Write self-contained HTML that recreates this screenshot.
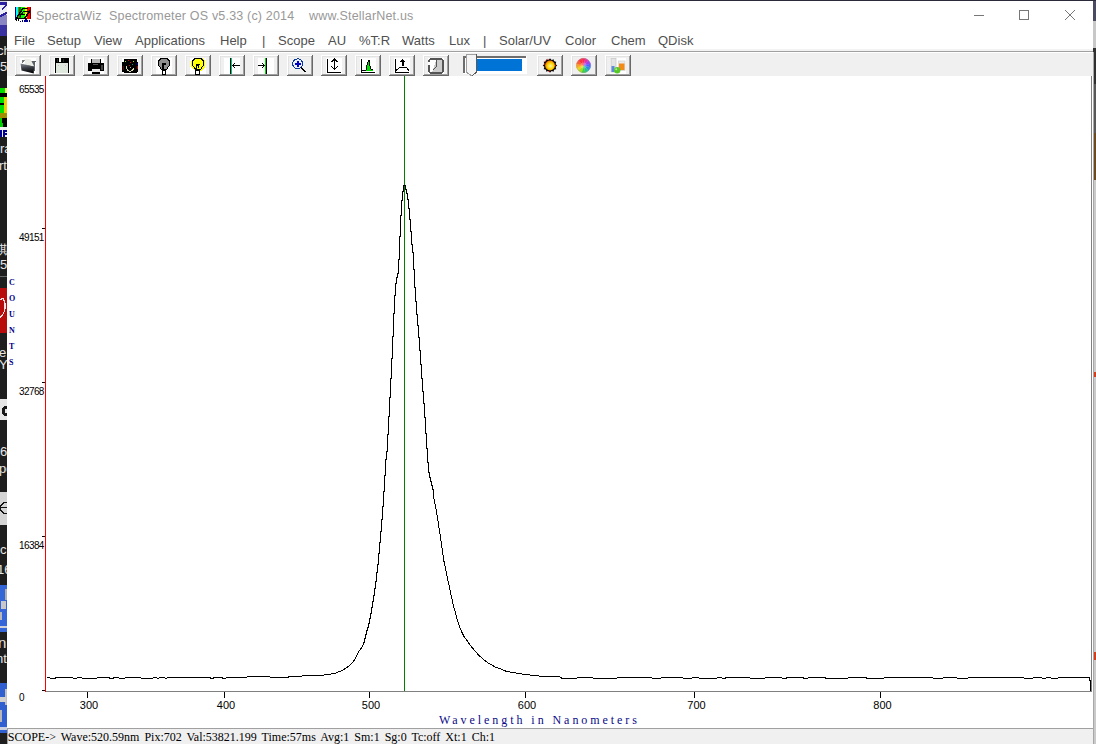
<!DOCTYPE html>
<html><head><meta charset="utf-8">
<style>
*{margin:0;padding:0;box-sizing:border-box}
html,body{width:1096px;height:744px;overflow:hidden;background:#fff;position:relative}
.a{position:absolute}
.sans{font-family:"Liberation Sans",sans-serif}
.serif{font-family:"Liberation Serif",serif}
.menu{position:absolute;top:33px;font-family:"Liberation Sans",sans-serif;font-size:13px;line-height:15px;color:#505050;white-space:pre}
.yl{position:absolute;left:19px;font-family:"Liberation Sans",sans-serif;font-size:10px;color:#000;letter-spacing:-0.6px;line-height:10px}
.xl{position:absolute;top:700px;font-family:"Liberation Sans",sans-serif;font-size:11px;color:#000;line-height:11px;width:40px;text-align:center}
.cnt{position:absolute;left:9px;font-family:"Liberation Serif",serif;font-weight:bold;font-size:8px;color:#00008b;line-height:8px}
</style></head><body>
<svg class="a" style="left:0;top:0" width="1096" height="744" shape-rendering="crispEdges">
 <defs><clipPath id="stripclip"><rect x="0" y="0" width="7" height="744"/></clipPath></defs>
 <g clip-path="url(#stripclip)"><rect x="0" y="0" width="7" height="15" fill="#eeeef6"/><rect x="0" y="15" width="7" height="10" fill="#8a86c4"/><rect x="0" y="25" width="7" height="11" fill="#3a32a0"/><rect x="0" y="36" width="7" height="52" fill="#1c1c1c"/><rect x="0" y="88" width="7" height="49" fill="#1e1e1e"/><rect x="0" y="137" width="7" height="151" fill="#1e1e1e"/><rect x="0" y="288" width="7" height="45" fill="#b80c0c"/><rect x="0" y="333" width="7" height="66" fill="#1e1e1e"/><rect x="0" y="399" width="7" height="21" fill="#e6e6e6"/><rect x="0" y="420" width="7" height="72" fill="#1e1e1e"/><rect x="0" y="492" width="7" height="33" fill="#d4d4d4"/><rect x="0" y="525" width="7" height="63" fill="#1e1e1e"/><rect x="0" y="585" width="7" height="47" fill="#3566d8"/><rect x="0" y="632" width="7" height="51" fill="#1e1e1e"/><rect x="0" y="683" width="7" height="50" fill="#3060d0"/><rect x="0" y="733" width="7" height="11" fill="#1e1e1e"/>
 
 <rect x="0" y="0" width="7" height="2" fill="#d8d8e0"/><path d="M0 2.5 L7 2 L7 4.5 L0 5 Z" fill="#2a20a0"/><path d="M7 4 L7 6 L2 10 L1 9 Z" fill="#2a20a0"/><path d="M0 15 L7 11.5 L7 14 L0 17.5 Z" fill="#2a20a0"/>
 <rect x="0" y="88" width="5" height="5" fill="#00e000"/><rect x="5" y="88" width="2" height="5" fill="#f0f060"/>
 <rect x="0" y="93" width="7" height="4" fill="#000"/><rect x="0" y="97" width="4" height="6" fill="#00e000"/><rect x="4" y="97" width="3" height="9" fill="#f0d000"/>
 <rect x="0" y="103" width="4" height="2" fill="#000"/><rect x="0" y="105" width="4" height="8" fill="#00e000"/><rect x="4" y="106" width="3" height="7" fill="#f0d000"/>
 <rect x="0" y="113" width="7" height="5" fill="#a09000"/><rect x="0" y="118" width="7" height="5" fill="#000"/><rect x="0" y="118" width="2" height="5" fill="#00d000"/>
 <rect x="0" y="123" width="3" height="4" fill="#00d000"/><rect x="3" y="123" width="4" height="4" fill="#000"/><rect x="0" y="127" width="7" height="3" fill="#f0f0f0"/>
 <rect x="0" y="130" width="7" height="7" fill="#f0f0f8"/><rect x="0" y="130" width="2" height="7" fill="#000090"/><rect x="3" y="130" width="4" height="2" fill="#000090"/><rect x="3" y="133" width="4" height="1.5" fill="#000090"/><rect x="3" y="130" width="1.5" height="7" fill="#000090"/>
 <rect x="0" y="276" width="7" height="1" fill="#666"/>
 <path d="M0 300 Q4 296 5 304 Q6 312 0 318" stroke="#f0e0e0" stroke-width="1.3" fill="none"/>
 <circle cx="7" cy="411" r="5.5" fill="#181818"/><circle cx="7" cy="411" r="2.2" fill="#e6e6e6"/>
 <circle cx="6" cy="508" r="5.5" fill="none" stroke="#111" stroke-width="1.3"/><rect x="0" y="507" width="7" height="1.2" fill="#111"/>
 <rect x="1" y="601" width="5" height="8" fill="#c8c8c8"/><rect x="0" y="612" width="2" height="8" fill="#b8b8b8"/><rect x="5" y="589" width="2" height="11" fill="#b0b0b0"/><rect x="0" y="626" width="7" height="2" fill="#d0d0d8"/>
 <rect x="5" y="689" width="2" height="16" fill="#c0c0c0"/><rect x="0" y="697" width="6" height="5" fill="#d0d0d0"/><rect x="0" y="710" width="2" height="12" fill="#b8b8b8"/><rect x="0" y="727" width="7" height="3" fill="#c8d0e0"/>
</g>
 <rect x="1093" y="0" width="3" height="21" fill="#4a4a60"/>
 <rect x="1093" y="21" width="3" height="27" fill="#c8c8c8"/>
 <rect x="1093" y="48" width="3" height="36" fill="#303030"/>
 <rect x="1093" y="84" width="3" height="49" fill="#585858"/>
 <rect x="1093" y="133" width="3" height="47" fill="#6a4a20"/>
 <rect x="1093" y="180" width="3" height="564" fill="#cacaca"/>
 <rect x="1094" y="372" width="2" height="5" fill="#d04020"/>
 <rect x="1094" y="652" width="2" height="8" fill="#d04020"/>
 <rect x="0" y="0" width="1096" height="1" fill="#2a2a3a"/>
 <rect x="7" y="49" width="1086" height="2" fill="#f3f3f3"/>
 <rect x="7" y="51" width="1086" height="1" fill="#a0a0a0"/>
 <rect x="7" y="53" width="1086" height="23" fill="#f0f0f0"/>
 <rect x="7" y="52" width="1086" height="1" fill="#fff"/>
 <rect x="15" y="55" width="26" height="21" fill="#fff"/><rect x="16" y="56" width="25" height="20" fill="#e3e3e3"/><rect x="40" y="55" width="1" height="21" fill="#696969"/><rect x="15" y="75" width="26" height="1" fill="#696969"/><rect x="16" y="56" width="23" height="18" fill="#e3e3e3"/><rect x="39" y="56" width="1" height="19" fill="#a0a0a0"/><rect x="16" y="74" width="24" height="1" fill="#a0a0a0"/><rect x="17" y="57" width="22" height="17" fill="#f0f0f0"/><rect x="49" y="55" width="26" height="21" fill="#fff"/><rect x="50" y="56" width="25" height="20" fill="#e3e3e3"/><rect x="74" y="55" width="1" height="21" fill="#696969"/><rect x="49" y="75" width="26" height="1" fill="#696969"/><rect x="50" y="56" width="23" height="18" fill="#e3e3e3"/><rect x="73" y="56" width="1" height="19" fill="#a0a0a0"/><rect x="50" y="74" width="24" height="1" fill="#a0a0a0"/><rect x="51" y="57" width="22" height="17" fill="#f0f0f0"/><rect x="83" y="55" width="26" height="21" fill="#fff"/><rect x="84" y="56" width="25" height="20" fill="#e3e3e3"/><rect x="108" y="55" width="1" height="21" fill="#696969"/><rect x="83" y="75" width="26" height="1" fill="#696969"/><rect x="84" y="56" width="23" height="18" fill="#e3e3e3"/><rect x="107" y="56" width="1" height="19" fill="#a0a0a0"/><rect x="84" y="74" width="24" height="1" fill="#a0a0a0"/><rect x="85" y="57" width="22" height="17" fill="#f0f0f0"/><rect x="117" y="55" width="26" height="21" fill="#fff"/><rect x="118" y="56" width="25" height="20" fill="#e3e3e3"/><rect x="142" y="55" width="1" height="21" fill="#696969"/><rect x="117" y="75" width="26" height="1" fill="#696969"/><rect x="118" y="56" width="23" height="18" fill="#e3e3e3"/><rect x="141" y="56" width="1" height="19" fill="#a0a0a0"/><rect x="118" y="74" width="24" height="1" fill="#a0a0a0"/><rect x="119" y="57" width="22" height="17" fill="#f0f0f0"/><rect x="151" y="55" width="26" height="21" fill="#fff"/><rect x="152" y="56" width="25" height="20" fill="#e3e3e3"/><rect x="176" y="55" width="1" height="21" fill="#696969"/><rect x="151" y="75" width="26" height="1" fill="#696969"/><rect x="152" y="56" width="23" height="18" fill="#e3e3e3"/><rect x="175" y="56" width="1" height="19" fill="#a0a0a0"/><rect x="152" y="74" width="24" height="1" fill="#a0a0a0"/><rect x="153" y="57" width="22" height="17" fill="#f0f0f0"/><rect x="185" y="55" width="26" height="21" fill="#fff"/><rect x="186" y="56" width="25" height="20" fill="#e3e3e3"/><rect x="210" y="55" width="1" height="21" fill="#696969"/><rect x="185" y="75" width="26" height="1" fill="#696969"/><rect x="186" y="56" width="23" height="18" fill="#e3e3e3"/><rect x="209" y="56" width="1" height="19" fill="#a0a0a0"/><rect x="186" y="74" width="24" height="1" fill="#a0a0a0"/><rect x="187" y="57" width="22" height="17" fill="#f0f0f0"/><rect x="219" y="55" width="26" height="21" fill="#fff"/><rect x="220" y="56" width="25" height="20" fill="#e3e3e3"/><rect x="244" y="55" width="1" height="21" fill="#696969"/><rect x="219" y="75" width="26" height="1" fill="#696969"/><rect x="220" y="56" width="23" height="18" fill="#e3e3e3"/><rect x="243" y="56" width="1" height="19" fill="#a0a0a0"/><rect x="220" y="74" width="24" height="1" fill="#a0a0a0"/><rect x="221" y="57" width="22" height="17" fill="#f0f0f0"/><rect x="253" y="55" width="26" height="21" fill="#fff"/><rect x="254" y="56" width="25" height="20" fill="#e3e3e3"/><rect x="278" y="55" width="1" height="21" fill="#696969"/><rect x="253" y="75" width="26" height="1" fill="#696969"/><rect x="254" y="56" width="23" height="18" fill="#e3e3e3"/><rect x="277" y="56" width="1" height="19" fill="#a0a0a0"/><rect x="254" y="74" width="24" height="1" fill="#a0a0a0"/><rect x="255" y="57" width="22" height="17" fill="#f0f0f0"/><rect x="287" y="55" width="26" height="21" fill="#fff"/><rect x="288" y="56" width="25" height="20" fill="#e3e3e3"/><rect x="312" y="55" width="1" height="21" fill="#696969"/><rect x="287" y="75" width="26" height="1" fill="#696969"/><rect x="288" y="56" width="23" height="18" fill="#e3e3e3"/><rect x="311" y="56" width="1" height="19" fill="#a0a0a0"/><rect x="288" y="74" width="24" height="1" fill="#a0a0a0"/><rect x="289" y="57" width="22" height="17" fill="#f0f0f0"/><rect x="321" y="55" width="26" height="21" fill="#fff"/><rect x="322" y="56" width="25" height="20" fill="#e3e3e3"/><rect x="346" y="55" width="1" height="21" fill="#696969"/><rect x="321" y="75" width="26" height="1" fill="#696969"/><rect x="322" y="56" width="23" height="18" fill="#e3e3e3"/><rect x="345" y="56" width="1" height="19" fill="#a0a0a0"/><rect x="322" y="74" width="24" height="1" fill="#a0a0a0"/><rect x="323" y="57" width="22" height="17" fill="#f0f0f0"/><rect x="355" y="55" width="26" height="21" fill="#fff"/><rect x="356" y="56" width="25" height="20" fill="#e3e3e3"/><rect x="380" y="55" width="1" height="21" fill="#696969"/><rect x="355" y="75" width="26" height="1" fill="#696969"/><rect x="356" y="56" width="23" height="18" fill="#e3e3e3"/><rect x="379" y="56" width="1" height="19" fill="#a0a0a0"/><rect x="356" y="74" width="24" height="1" fill="#a0a0a0"/><rect x="357" y="57" width="22" height="17" fill="#f0f0f0"/><rect x="389" y="55" width="26" height="21" fill="#fff"/><rect x="390" y="56" width="25" height="20" fill="#e3e3e3"/><rect x="414" y="55" width="1" height="21" fill="#696969"/><rect x="389" y="75" width="26" height="1" fill="#696969"/><rect x="390" y="56" width="23" height="18" fill="#e3e3e3"/><rect x="413" y="56" width="1" height="19" fill="#a0a0a0"/><rect x="390" y="74" width="24" height="1" fill="#a0a0a0"/><rect x="391" y="57" width="22" height="17" fill="#f0f0f0"/><rect x="423" y="55" width="26" height="21" fill="#fff"/><rect x="424" y="56" width="25" height="20" fill="#e3e3e3"/><rect x="448" y="55" width="1" height="21" fill="#696969"/><rect x="423" y="75" width="26" height="1" fill="#696969"/><rect x="424" y="56" width="23" height="18" fill="#e3e3e3"/><rect x="447" y="56" width="1" height="19" fill="#a0a0a0"/><rect x="424" y="74" width="24" height="1" fill="#a0a0a0"/><rect x="425" y="57" width="22" height="17" fill="#f0f0f0"/><rect x="537" y="55" width="26" height="21" fill="#fff"/><rect x="538" y="56" width="25" height="20" fill="#e3e3e3"/><rect x="562" y="55" width="1" height="21" fill="#696969"/><rect x="537" y="75" width="26" height="1" fill="#696969"/><rect x="538" y="56" width="23" height="18" fill="#e3e3e3"/><rect x="561" y="56" width="1" height="19" fill="#a0a0a0"/><rect x="538" y="74" width="24" height="1" fill="#a0a0a0"/><rect x="539" y="57" width="22" height="17" fill="#f0f0f0"/><rect x="571" y="55" width="26" height="21" fill="#fff"/><rect x="572" y="56" width="25" height="20" fill="#e3e3e3"/><rect x="596" y="55" width="1" height="21" fill="#696969"/><rect x="571" y="75" width="26" height="1" fill="#696969"/><rect x="572" y="56" width="23" height="18" fill="#e3e3e3"/><rect x="595" y="56" width="1" height="19" fill="#a0a0a0"/><rect x="572" y="74" width="24" height="1" fill="#a0a0a0"/><rect x="573" y="57" width="22" height="17" fill="#f0f0f0"/><rect x="605" y="55" width="26" height="21" fill="#fff"/><rect x="606" y="56" width="25" height="20" fill="#e3e3e3"/><rect x="630" y="55" width="1" height="21" fill="#696969"/><rect x="605" y="75" width="26" height="1" fill="#696969"/><rect x="606" y="56" width="23" height="18" fill="#e3e3e3"/><rect x="629" y="56" width="1" height="19" fill="#a0a0a0"/><rect x="606" y="74" width="24" height="1" fill="#a0a0a0"/><rect x="607" y="57" width="22" height="17" fill="#f0f0f0"/><rect x="20" y="58" width="16" height="16" fill="#fff"/>
<defs><linearGradient id="fg" x1="0" y1="0" x2="0.15" y2="1"><stop offset="0" stop-color="#8a9098"/><stop offset="0.5" stop-color="#3a3e44"/><stop offset="1" stop-color="#050505"/></linearGradient></defs>
<path d="M23 59.5 L35.5 61.5 L35 71 L32 70 Z" fill="#5a6068"/>
<path d="M24.5 58.5 L30.5 59.3 L34.3 66.5 L25 65 Z" fill="#ecece6" shape-rendering="geometricPrecision"/>
<path d="M20.5 63.5 L34 66.5 L33.8 73.5 L21.5 70.5 Z" fill="url(#fg)" shape-rendering="geometricPrecision"/>
<path d="M22 60 L24 59.5 L23.5 62 L22 63 Z" fill="#70767e"/><rect x="54" y="58" width="16" height="16" fill="#fff"/>
<rect x="55" y="58" width="14" height="15" fill="#000"/>
<rect x="56" y="63" width="12" height="10" fill="#dfe8dc"/>
<rect x="55" y="72" width="1" height="1" fill="#000"/><rect x="68" y="72" width="1" height="1" fill="#000"/>
<rect x="59" y="58" width="2" height="4" fill="#f4f8f4"/>
<rect x="57" y="59" width="1" height="3" fill="#303030"/><rect x="63" y="59" width="1" height="3" fill="#203020"/>
<rect x="58" y="65" width="1" height="1" fill="#e0b0e0"/><rect x="65" y="65" width="1" height="1" fill="#e0b0e0"/><rect x="88" y="58" width="16" height="16" fill="#fff"/>
<rect x="92" y="59" width="8" height="4" fill="#b8b8b8"/>
<rect x="91" y="59" width="1" height="5" fill="#000"/><rect x="100" y="59" width="1" height="5" fill="#000"/>
<rect x="88" y="63" width="16" height="8" fill="#000"/>
<rect x="93" y="64" width="5" height="1" fill="#555"/>
<rect x="101" y="65" width="2" height="5" fill="#444"/>
<rect x="92" y="69" width="8" height="3" fill="#e8e8e8"/>
<rect x="92" y="72" width="8" height="1.5" fill="#000"/><rect x="122" y="58" width="16" height="16" fill="#fff"/>
<rect x="124" y="59" width="13" height="14" fill="#000"/>
<rect x="122" y="62" width="16" height="10" fill="#000"/>
<path d="M126 66 Q127 72 131 71 Q133 70 134 68" stroke="#d8d8a8" stroke-width="1" fill="none"/>
<rect x="128" y="60" width="1" height="1" fill="#c00"/><rect x="130" y="62" width="1" height="1" fill="#e00"/>
<rect x="125" y="61" width="1" height="1" fill="#cc0"/><rect x="133" y="61" width="1" height="1" fill="#cc0"/>
<rect x="129" y="65" width="1" height="1" fill="#d00"/><rect x="132" y="64" width="1" height="1" fill="#088"/>
<rect x="137" y="63" width="1" height="2" fill="#00a"/><rect x="137" y="66" width="1" height="3" fill="#a00"/>
<rect x="123" y="66" width="1" height="4" fill="#600"/><rect x="130" y="67" width="1" height="1" fill="#aaa"/><rect x="156" y="58" width="16" height="16" fill="#fff"/>
<path d="M161 58.5 L167 58.5 L169.5 61 L169.5 65 L166.5 69.5 L161.5 69.5 L158.5 65 L158.5 61 Z" fill="#909090" stroke="#000" stroke-width="1"/>
<path d="M163 69 L163 64 L165.5 64" stroke="#000" stroke-width="1.2" fill="none"/>
<rect x="162.5" y="70.5" width="3" height="3.5" fill="#fff" stroke="#000" stroke-width="1"/><rect x="190" y="58" width="16" height="16" fill="#fff"/>
<path d="M194 58 L202 58 L205 61 L205 67 L201 71 L195 71 L191 67 L191 61 Z" fill="#ffff00"/>
<path d="M195 58.5 L201 58.5 L203.5 61 L203.5 65 L200.5 69.5 L195.5 69.5 L192.5 65 L192.5 61 Z" fill="#ffff00" stroke="#000" stroke-width="1"/>
<path d="M196 69 L196.5 65 L199 65 L198 68" stroke="#000" stroke-width="1.2" fill="none"/>
<rect x="195.5" y="70.5" width="4" height="3.5" fill="#fff" stroke="#000" stroke-width="1"/><rect x="224" y="58" width="16" height="16" fill="#fff"/>
<rect x="230" y="58" width="1" height="16" fill="#00008b"/><rect x="231" y="58" width="1" height="16" fill="#00e000"/>
<rect x="232" y="65" width="8" height="1" fill="#000"/>
<path d="M235 63 L232.5 65.5 L235 68" stroke="#000" stroke-width="1.2" fill="none"/><rect x="258" y="58" width="16" height="16" fill="#fff"/>
<rect x="265" y="58" width="1" height="16" fill="#00e000"/><rect x="266" y="58" width="1" height="16" fill="#000"/>
<rect x="258" y="65" width="7" height="1" fill="#000"/>
<path d="M262 63 L264.5 65.5 L262 68" stroke="#000" stroke-width="1.2" fill="none"/><circle cx="297.7" cy="63.8" r="5" fill="#e8f0ff" stroke="#0a3a9a" stroke-width="1"/>
<rect x="295" y="63" width="6" height="2" fill="#0000c0"/><rect x="297" y="61" width="2" height="6" fill="#0000c0"/>
<path d="M301 67.5 L305.5 72" stroke="#000" stroke-width="1.3"/><rect x="326" y="58" width="16" height="16" fill="#fff"/>
<rect x="327" y="59" width="1" height="14" fill="#000"/><rect x="327" y="72" width="14" height="1" fill="#000"/>
<rect x="334" y="59" width="1" height="11" fill="#000"/>
<path d="M331.5 62 L334.5 58.8 L337.5 62" stroke="#000" stroke-width="1.1" fill="none"/>
<path d="M331.5 66.5 L334.5 69.5 L337.5 66.5" stroke="#000" stroke-width="1.1" fill="none"/><rect x="360" y="58" width="16" height="16" fill="#fff"/>
<rect x="361" y="59" width="1" height="14" fill="#000"/><rect x="361" y="72" width="14" height="1" fill="#000"/>
<path d="M362 70.5 L366 70.5 L366.5 67 L368 62 L369 60 L370 66 L371 69 L373.5 70.5" fill="#00e000" stroke="#000" stroke-width="1"/><rect x="394" y="58" width="16" height="16" fill="#fff"/>
<rect x="395" y="59" width="1" height="14" fill="#000"/><rect x="395" y="72" width="14" height="1" fill="#000"/>
<path d="M396 70.5 L399 68 L402 67 L406 67 L409 70.5" stroke="#000" stroke-width="1" fill="none"/>
<rect x="401.5" y="60" width="2" height="6" fill="#000"/>
<path d="M399.5 62 L402.5 58.8 L405.5 62 Z" fill="#000"/><rect x="428" y="58" width="16" height="16" fill="#fff"/>
<path d="M436.5 59 L440 59 Q443 59 443 62 L443 70 Q443 73 440 73 L432 73 Z" fill="#cccccc"/>
<path d="M429 62 Q429 59 432 59 L440 59 Q443 59 443 62 L443 70 Q443 73 440 73 L432 73 Q429 73 429 70 L429 64.5" fill="none" stroke="#555" stroke-width="1.6"/>
<path d="M436.5 60 L436.5 66.5 L433 70" fill="none" stroke="#555" stroke-width="1.3"/><defs><radialGradient id="sg" cx="0.55" cy="0.55" r="0.55"><stop offset="0" stop-color="#fff4b0"/><stop offset="0.55" stop-color="#ffd800"/><stop offset="1" stop-color="#f07800"/></radialGradient></defs>
<g shape-rendering="geometricPrecision"><path d="M555.29 63.98 L557.30 65.50 L555.29 67.02 Z" fill="#000"/><path d="M555.34 66.83 L556.32 69.15 L553.82 69.46 Z" fill="#000"/><path d="M553.96 69.32 L553.65 71.82 L551.33 70.84 Z" fill="#000"/><path d="M551.52 70.79 L550.00 72.80 L548.48 70.79 Z" fill="#000"/><path d="M548.67 70.84 L546.35 71.82 L546.04 69.32 Z" fill="#000"/><path d="M546.18 69.46 L543.68 69.15 L544.66 66.83 Z" fill="#000"/><path d="M544.71 67.02 L542.70 65.50 L544.71 63.98 Z" fill="#000"/><path d="M544.66 64.17 L543.68 61.85 L546.18 61.54 Z" fill="#000"/><path d="M546.04 61.68 L546.35 59.18 L548.67 60.16 Z" fill="#000"/><path d="M548.48 60.21 L550.00 58.20 L551.52 60.21 Z" fill="#000"/><path d="M551.33 60.16 L553.65 59.18 L553.96 61.68 Z" fill="#000"/><path d="M553.82 61.54 L556.32 61.85 L555.34 64.17 Z" fill="#000"/>
<circle cx="550" cy="65.5" r="5.9" fill="#000"/>
<circle cx="550" cy="65.5" r="4.9" fill="url(#sg)"/>
<circle cx="545.5" cy="61" r="0.6" fill="#f00"/><circle cx="548" cy="59.3" r="0.6" fill="#f00"/><circle cx="544.3" cy="64" r="0.6" fill="#f00"/><circle cx="555.5" cy="65.5" r="0.6" fill="#f00"/><circle cx="549" cy="71.5" r="0.6" fill="#f00"/></g><g shape-rendering="geometricPrecision"><path d="M583.5 65.5 L581.64 58.55 A7.2 7.2 0 0 1 585.36 58.55 Z" fill="#ff2a50" stroke="#ff2a50" stroke-width="0.3"/><path d="M583.5 65.5 L585.36 58.55 A7.2 7.2 0 0 1 588.59 60.41 Z" fill="#e030b0" stroke="#e030b0" stroke-width="0.3"/><path d="M583.5 65.5 L588.59 60.41 A7.2 7.2 0 0 1 590.45 63.64 Z" fill="#a040f0" stroke="#a040f0" stroke-width="0.3"/><path d="M583.5 65.5 L590.45 63.64 A7.2 7.2 0 0 1 590.45 67.36 Z" fill="#5060ff" stroke="#5060ff" stroke-width="0.3"/><path d="M583.5 65.5 L590.45 67.36 A7.2 7.2 0 0 1 588.59 70.59 Z" fill="#3090e0" stroke="#3090e0" stroke-width="0.3"/><path d="M583.5 65.5 L588.59 70.59 A7.2 7.2 0 0 1 585.36 72.45 Z" fill="#20c0a0" stroke="#20c0a0" stroke-width="0.3"/><path d="M583.5 65.5 L585.36 72.45 A7.2 7.2 0 0 1 581.64 72.45 Z" fill="#40d040" stroke="#40d040" stroke-width="0.3"/><path d="M583.5 65.5 L581.64 72.45 A7.2 7.2 0 0 1 578.41 70.59 Z" fill="#a0e020" stroke="#a0e020" stroke-width="0.3"/><path d="M583.5 65.5 L578.41 70.59 A7.2 7.2 0 0 1 576.55 67.36 Z" fill="#f0d020" stroke="#f0d020" stroke-width="0.3"/><path d="M583.5 65.5 L576.55 67.36 A7.2 7.2 0 0 1 576.55 63.64 Z" fill="#ffa020" stroke="#ffa020" stroke-width="0.3"/><path d="M583.5 65.5 L576.55 63.64 A7.2 7.2 0 0 1 578.41 60.41 Z" fill="#ff6030" stroke="#ff6030" stroke-width="0.3"/><path d="M583.5 65.5 L578.41 60.41 A7.2 7.2 0 0 1 581.64 58.55 Z" fill="#ff3040" stroke="#ff3040" stroke-width="0.3"/><circle cx="583.5" cy="65.5" r="3" fill="#fff" opacity="0.25"/><circle cx="583.5" cy="65.5" r="7" fill="none" stroke="#909090" stroke-width="0.6" opacity="0.6"/></g><rect x="610" y="58" width="16" height="16" fill="#fff"/>
<rect x="611" y="58.5" width="5" height="13.5" fill="#e4e4e4" stroke="#c4c4c4" stroke-width="0.7" shape-rendering="geometricPrecision"/>
<rect x="611.5" y="66" width="3" height="6" fill="#5a8ad8" shape-rendering="geometricPrecision"/>
<rect x="618.5" y="61" width="6.5" height="9.5" fill="#eaeaea" stroke="#d0d0d0" stroke-width="0.7" shape-rendering="geometricPrecision"/>
<rect x="619" y="63.5" width="5.5" height="6.5" fill="#f28a18" shape-rendering="geometricPrecision"/>
<circle cx="617.2" cy="70.3" r="3.2" fill="#58c828" shape-rendering="geometricPrecision"/>
<circle cx="616.2" cy="69.3" r="1" fill="#b0ea90" shape-rendering="geometricPrecision"/><rect x="463" y="56" width="64" height="18" fill="#fff"/>
<rect x="463" y="56" width="63" height="2" fill="#6d6d6d"/>
<rect x="463" y="56" width="2" height="17" fill="#6d6d6d"/>
<rect x="477" y="59" width="45" height="12" fill="#0073d7"/>
<path d="M466 54.5 L476.5 54.5 L476.5 72 L472 76 L466 72 Z" fill="#f4f4f4" stroke="#a0a0a0" stroke-width="1"/>
<path d="M476.5 54 L476.5 72 L472 76" fill="none" stroke="#5a5a5a" stroke-width="1"/>
 <rect x="45" y="76" width="1" height="616" fill="#ff0000"/>
 <rect x="46" y="691" width="1046" height="1" fill="#808080"/>
 <rect x="1091" y="76" width="1" height="616" fill="#808080"/>
 <rect x="42" y="690" width="3" height="1" fill="#000"/>
 <rect x="42" y="536" width="3" height="1" fill="#000"/>
 <rect x="42" y="382" width="3" height="1" fill="#000"/>
 <rect x="42" y="228" width="3" height="1" fill="#000"/>
 <rect x="87" y="692" width="1" height="6" fill="#000"/>
 <rect x="224" y="692" width="1" height="6" fill="#000"/>
 <rect x="369" y="692" width="1" height="6" fill="#000"/>
 <rect x="525" y="692" width="1" height="6" fill="#000"/>
 <rect x="694" y="692" width="1" height="6" fill="#000"/>
 <rect x="880" y="692" width="1" height="6" fill="#000"/>
 <rect x="404" y="76" width="1" height="615" fill="#008000"/>
 <path d="M47.0 677.5 L53.0 678.5 L58.0 677.5 L64.0 677.5 L70.0 677.5 L76.0 678.5 L78.0 677.5 L81.0 677.5 L83.0 678.5 L88.0 678.5 L94.0 678.5 L100.0 677.5 L106.0 677.5 L108.0 677.5 L111.0 678.5 L116.0 677.5 L122.0 678.5 L128.0 677.5 L132.0 677.5 L134.0 677.5 L138.0 677.5 L144.0 678.5 L146.0 678.5 L150.0 678.5 L156.0 677.5 L158.0 678.5 L160.0 677.5 L164.0 677.5 L166.0 678.5 L168.0 677.5 L170.0 677.5 L175.0 677.5 L181.0 677.5 L185.0 677.5 L189.0 677.5 L194.0 677.5 L196.0 677.5 L198.0 677.5 L203.0 677.5 L206.0 677.5 L209.0 677.5 L212.0 678.5 L215.0 677.5 L220.0 677.5 L225.0 678.5 L227.0 677.5 L233.0 677.5 L235.0 677.5 L240.0 677.5 L246.0 677.5 L248.0 676.5 L251.0 676.5 L255.0 676.5 L261.0 676.5 L265.0 676.5 L267.0 676.5 L273.0 677.5 L275.0 677.5 L279.0 677.5 L282.0 677.5 L287.0 677.5 L290.0 676.5 L322.4 675.2 L330.5 674.2 L336.1 672.9 L340.2 671.3 L344.2 669.3 L348.2 666.5 L352.3 662.8 L354.7 659.6 L357.1 654.8 L359.5 650.4 L361.9 647.5 L364.0 642.6 L366.0 634.5 L367.5 628.0 L367.5 631.0 L367.5 627.0 L368.5 627.0 L368.5 623.0 L369.5 623.0 L369.5 618.0 L370.5 618.0 L370.5 613.0 L371.5 613.0 L371.5 607.0 L372.5 607.0 L372.5 601.0 L373.5 601.0 L373.5 595.0 L374.5 595.0 L374.5 588.0 L375.5 588.0 L375.5 581.0 L376.5 581.0 L376.5 572.0 L377.5 572.0 L377.5 564.0 L378.5 564.0 L378.5 553.0 L379.5 553.0 L379.5 542.0 L380.5 542.0 L380.5 531.0 L381.5 531.0 L381.5 519.0 L382.5 519.0 L382.5 506.0 L383.5 506.0 L383.5 491.0 L384.5 491.0 L384.5 475.0 L385.5 475.0 L385.5 459.0 L386.5 459.0 L386.5 451.0 L387.5 451.0 L387.5 434.0 L388.5 434.0 L388.5 416.0 L389.5 416.0 L389.5 397.0 L390.5 397.0 L390.5 378.0 L391.5 378.0 L391.5 358.0 L392.5 358.0 L392.5 336.0 L393.5 336.0 L393.5 313.0 L394.5 313.0 L394.5 295.0 L395.5 295.0 L395.5 283.0 L396.5 283.0 L396.5 277.0 L397.5 277.0 L397.5 273.0 L398.5 273.0 L398.5 259.0 L399.5 259.0 L399.5 236.0 L400.5 236.0 L400.5 215.0 L401.5 215.0 L401.5 200.0 L402.5 200.0 L402.5 191.0 L403.5 191.0 L403.5 186.0 L404.5 185.0 L405.5 185.0 L405.5 189.0 L406.5 189.0 L406.5 193.0 L407.5 193.0 L407.5 199.0 L408.5 199.0 L408.5 208.0 L409.5 208.0 L409.5 219.0 L410.5 219.0 L410.5 231.0 L411.5 231.0 L411.5 244.0 L412.5 244.0 L412.5 252.0 L413.5 252.0 L413.5 269.0 L414.5 269.0 L414.5 287.0 L415.5 287.0 L415.5 301.0 L416.5 301.0 L416.5 314.0 L417.5 314.0 L417.5 325.0 L418.5 325.0 L418.5 337.0 L419.5 337.0 L419.5 350.0 L420.5 350.0 L420.5 364.0 L421.5 364.0 L421.5 378.0 L422.5 378.0 L422.5 391.0 L423.5 391.0 L423.5 403.0 L424.5 403.0 L424.5 417.0 L425.5 417.0 L425.5 433.0 L426.5 433.0 L426.5 448.0 L427.5 448.0 L427.5 462.0 L428.5 462.0 L428.5 472.0 L429.5 472.0 L429.5 477.0 L430.5 477.0 L430.5 481.0 L431.5 481.0 L431.5 485.0 L432.5 485.0 L432.5 489.0 L433.5 489.0 L433.5 496.0 L436.6 512.3 L440.0 533.8 L443.7 560.0 L448.2 581.5 L452.8 603.0 L457.3 620.0 L459.4 626.5 L461.8 632.1 L464.2 636.9 L467.4 641.0 L470.6 645.8 L474.7 650.6 L478.7 655.1 L483.5 659.5 L488.4 663.1 L494.8 666.8 L500.0 668.6 L506.6 671.5 L524.1 674.3 L541.6 676.3 L560.0 676.8 L562.0 678.5 L566.0 678.5 L572.0 678.5 L582.0 677.5 L586.0 677.5 L600.0 678.5 L604.0 678.5 L612.0 678.5 L622.0 677.5 L625.0 677.5 L628.0 677.5 L634.0 677.5 L648.0 677.5 L656.0 678.5 L666.0 677.5 L676.0 677.5 L690.0 678.5 L694.0 677.5 L704.0 678.5 L714.0 678.5 L720.0 677.5 L724.0 678.5 L727.0 677.5 L735.0 677.5 L738.0 677.5 L744.0 677.5 L748.0 677.5 L752.0 678.5 L758.0 678.5 L772.0 677.5 L776.0 677.5 L779.0 677.5 L785.0 678.5 L788.0 677.5 L802.0 677.5 L805.0 678.5 L811.0 677.5 L814.0 677.5 L824.0 677.5 L827.0 678.5 L841.0 678.5 L845.0 678.5 L851.0 677.5 L865.0 677.5 L868.0 678.5 L876.0 678.5 L879.0 678.5 L889.0 677.5 L903.0 677.5 L913.0 677.5 L916.0 677.5 L930.0 677.5 L936.0 678.5 L950.0 677.5 L964.0 678.5 L972.0 677.5 L982.0 677.5 L992.0 677.5 L1002.0 677.5 L1005.0 677.5 L1019.0 677.5 L1029.0 678.5 L1037.0 677.5 L1040.0 677.5 L1044.0 678.5 L1048.0 677.5 L1054.0 678.5 L1062.0 677.5 L1066.0 677.5 L1080.0 677.5 L1088.5 677.5 L1089.5 677.5 L1089.5 680.5 L1090.5 680.5 L1090.5 691.0" fill="none" stroke="#000" stroke-width="1"/>
 <rect x="7" y="728" width="1086" height="16" fill="#f0f0f0"/>
 <rect x="7" y="728" width="1086" height="1" fill="#a0a0a0"/>
 <rect x="7" y="728" width="1" height="16" fill="#a0a0a0"/>
 <rect x="1093" y="52" width="1" height="692" fill="#a8a8a8"/>
</svg>
<!-- title -->
<svg class="a" style="left:15px;top:7px" width="16" height="16" shape-rendering="crispEdges">
 <rect x="0" y="0" width="1" height="12" fill="#000080"/><rect x="1" y="0" width="2" height="12" fill="#00ffff"/>
 <rect x="3" y="0" width="1" height="12" fill="#808000"/><rect x="4" y="0" width="2" height="12" fill="#008000"/>
 <rect x="6" y="0" width="4" height="12" fill="#00ff00"/><rect x="10" y="0" width="2" height="12" fill="#ffff00"/>
 <rect x="12" y="0" width="3" height="12" fill="#ff0000"/><rect x="15" y="0" width="1" height="12" fill="#800000"/>
 <rect x="7" y="1" width="6" height="1" fill="#000"/>
 <rect x="9" y="4" width="6" height="1" fill="#000"/>
 <rect x="5" y="7" width="5" height="1" fill="#000"/>
 <rect x="1" y="11" width="11" height="1" fill="#000"/>
 <path d="M1.5 11 L7.5 2" stroke="#000" stroke-width="1.2" fill="none"/>
 <path d="M15 3.5 L9.5 11.5" stroke="#000" stroke-width="1.6" fill="none"/>
 <path d="M5 9.5 L8.5 4.5" stroke="#000" stroke-width="1" fill="none"/>
 <rect x="0" y="12" width="2" height="1" fill="#000"/><rect x="1" y="13" width="1" height="1" fill="#000"/><rect x="3" y="12" width="1" height="2" fill="#000"/>
 <rect x="10" y="12" width="2" height="2" fill="#000"/>
 <rect x="5" y="14" width="1" height="1" fill="#00008b"/><rect x="7" y="13" width="1" height="2" fill="#00008b"/>
 <rect x="9" y="13" width="4" height="2" fill="#00008b"/><rect x="10" y="12" width="2" height="1" fill="#00008b"/><rect x="14" y="13" width="1" height="2" fill="#00008b"/>
</svg>
<div class="a" style="left:0;top:0;width:7px;height:744px;overflow:hidden;font-family:'Liberation Sans',sans-serif;font-size:13px;line-height:13px;color:#e6e6e6;white-space:pre">
 <div class="a" style="left:-3px;top:44px">ch</div>
 <div class="a" style="left:0px;top:60px">5</div>
 <div class="a" style="left:0px;top:142px">ra</div>
 <div class="a" style="left:-1px;top:159px">rt</div>
 <div class="a" style="left:-1px;top:243px">期</div>
 <div class="a" style="left:0px;top:258px">5</div>
 <div class="a" style="left:-1px;top:346px">e</div>
 <div class="a" style="left:-1px;top:358px">Y</div>
 <div class="a" style="left:0px;top:445px">6</div>
 <div class="a" style="left:-1px;top:462px">pg</div>
 <div class="a" style="left:0px;top:543px">c</div>
 <div class="a" style="left:-3px;top:563px">16</div>
 <div class="a" style="left:-2px;top:636px;font-size:15px">n</div>
 <div class="a" style="left:-4px;top:652px">nt</div>
</div>
<div class="a sans" style="left:36px;top:8.5px;font-size:12.5px;color:#999;white-space:pre;line-height:14px;letter-spacing:0.18px">SpectraWiz  Spectrometer OS v5.33 (c) 2014    www.StellarNet.us</div>
<div class="a" style="left:974px;top:15px;width:10px;height:1px;background:#777"></div>
<div class="a" style="left:1019px;top:10px;width:10px;height:10px;border:1px solid #777"></div>
<svg class="a" style="left:1064px;top:9px" width="12" height="12"><path d="M1 1 L11 11 M11 1 L1 11" stroke="#777" stroke-width="1"/></svg>
<div class="menu" style="left:14px">File</div><div class="menu" style="left:47px">Setup</div><div class="menu" style="left:94px">View</div><div class="menu" style="left:135px">Applications</div><div class="menu" style="left:220px">Help</div><div class="menu" style="left:262px">|</div><div class="menu" style="left:278px">Scope</div><div class="menu" style="left:328px">AU</div><div class="menu" style="left:359px">%T:R</div><div class="menu" style="left:402px">Watts</div><div class="menu" style="left:449px">Lux</div><div class="menu" style="left:483px">|</div><div class="menu" style="left:499px">Solar/UV</div><div class="menu" style="left:565px">Color</div><div class="menu" style="left:611px">Chem</div><div class="menu" style="left:658px">QDisk</div>
<div class="yl" style="top:85px">65535</div>
<div class="yl" style="top:233px">49151</div>
<div class="yl" style="top:387px">32768</div>
<div class="yl" style="top:541px">16384</div>
<div class="yl" style="top:693px">0</div>
<div class="cnt" style="top:279px">C</div>
<div class="cnt" style="top:295px">O</div>
<div class="cnt" style="top:311px">U</div>
<div class="cnt" style="top:327px">N</div>
<div class="cnt" style="top:343px">T</div>
<div class="cnt" style="top:359px">S</div>
<div class="xl" style="left:69px">300</div>
<div class="xl" style="left:206px">400</div>
<div class="xl" style="left:351px">500</div>
<div class="xl" style="left:507px">600</div>
<div class="xl" style="left:676.5px">700</div>
<div class="xl" style="left:862.5px">800</div>
<div class="a serif" style="left:439px;top:714px;font-size:12px;color:#0a0a88;letter-spacing:2.94px;white-space:pre;line-height:12px">Wavelength in Nanometers</div>
<div class="a serif" style="left:7.8px;top:731px;font-size:12px;color:#000;white-space:pre;line-height:13px;word-spacing:-0.5px">SCOPE->  Wave:520.59nm  Pix:702  Val:53821.199  Time:57ms  Avg:1  Sm:1  Sg:0  Tc:off  Xt:1  Ch:1</div>
</body></html>
